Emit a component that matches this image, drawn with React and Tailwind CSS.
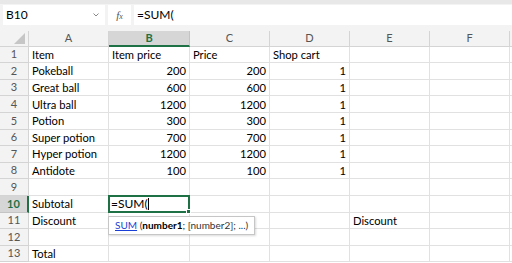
import React from 'react'

const cols = ['A', 'B', 'C', 'D', 'E', 'F']

const rows = [
  ['Item', 'Item price', 'Price', 'Shop cart', '', ''],
  ['Pokeball', 200, 200, 1, '', ''],
  ['Great ball', 600, 600, 1, '', ''],
  ['Ultra ball', 1200, 1200, 1, '', ''],
  ['Potion', 300, 300, 1, '', ''],
  ['Super potion', 700, 700, 1, '', ''],
  ['Hyper potion', 1200, 1200, 1, '', ''],
  ['Antidote', 100, 100, 1, '', ''],
  ['', '', '', '', '', ''],
  ['Subtotal', '', '', '', '', ''],
  ['Discount', '', '', '', 'Discount', ''],
  ['', '', '', '', '', ''],
  ['Total', '', '', '', '', ''],
]

const Cell = ({ value }) => {
  const num = typeof value === 'number'
  return (
    <div
      className={`h-[16.6px] border-r border-b border-[#e1e1e1] px-[3px] flex items-center leading-none whitespace-nowrap overflow-visible ${
        num ? 'justify-end' : 'justify-start'
      }`}
    >
      {value}
    </div>
  )
}

export default function App() {
  return (
    <div
      className="w-[512px] h-[263px] overflow-hidden bg-white text-[11.2px] text-black"
      style={{ fontFamily: 'Lato, "Open Sans", sans-serif' }}
    >
      {/* Formula bar */}
      <div className="h-[31px] bg-[#f3f3f3] border-t-[4px] border-[#e8e8e8] flex items-start pt-[1px] gap-[3px] pl-[3px]">
        <div className="w-[102px] h-[20px] bg-white flex items-center justify-between pl-[3px] pr-[6px] text-[12px]">
          <span>B10</span>
          <svg width="6" height="4" viewBox="0 0 6 4" className="text-[#888]">
            <path d="M0.5 0.5 L3 3 L5.5 0.5" fill="none" stroke="currentColor" strokeWidth="1" />
          </svg>
        </div>
        <div className="w-[23px] h-[20px] bg-white flex items-center justify-center text-[#555] italic text-[11px]" style={{ fontFamily: '"Liberation Serif", serif' }}>
          f<span className="text-[8px] mt-[3px]">x</span>
        </div>
        <div className="flex-1 h-[20px] bg-white flex items-center pl-[3px] text-[12px]">=SUM(</div>
      </div>

      {/* Grid */}
      <div className="relative grid grid-cols-[29px_80px_81px_80px_80px_80px_80px_1fr]">
        {/* header row */}
        <div className="h-[15.7px] bg-[#f3f3f3] border-r border-b border-[#d4d4d4] relative">
          <div
            className="absolute right-[3px] bottom-[2px] w-0 h-0 border-l-[11px] border-l-transparent border-b-[11px] border-b-[#c6c6c6]"
          />
        </div>
        {cols.map((c) => (
          <div
            key={c}
            className={`h-[15.7px] flex items-center justify-center border-r text-[11px] ${
              c === 'B'
                ? 'bg-[#d6d6d6] border-[#c4c4c4] border-b-2 border-b-[#1e7145] text-[#1e7145] font-bold'
                : 'bg-[#f3f3f3] border-[#d4d4d4] border-b text-[#555]'
            }`}
          >
            {c}
          </div>
        ))}
        <div className="h-[15.7px] bg-[#f3f3f3] border-b border-[#d4d4d4]" />

        {rows.map((r, i) => (
          <React.Fragment key={i}>
            <div
              className={`h-[16.6px] flex items-center justify-center text-[11px] border-b ${
                i === 9
                  ? 'bg-[#d6d6d6] text-[#1e7145] font-bold border-r-2 border-r-[#1e7145] border-b-[#c4c4c4]'
                  : 'bg-[#f3f3f3] text-[#555] border-r border-[#d4d4d4]'
              }`}
            >
              {i + 1}
            </div>
            {r.map((v, j) => (
              <Cell key={j} value={v} />
            ))}
            <div className="h-[16.6px] border-b border-[#e1e1e1]" />
          </React.Fragment>
        ))}

        {/* Active cell B10 */}
        <div className="absolute left-[108px] top-[164.3px] w-[82px] h-[18px] border-2 border-[#1e7145] flex items-center pl-[1px] text-[12px] leading-none">
          =SUM(<span className="w-px h-[12px] bg-black" />
          <div className="absolute -right-[3px] -bottom-[3px] w-[5px] h-[5px] bg-[#1e7145] border border-white" />
        </div>

        {/* Tooltip */}
        <div className="absolute left-[108px] top-[184.5px] w-[147px] h-[19px] bg-white border border-[#c6c6c6] shadow-[1px_1px_2px_rgba(0,0,0,0.15)] flex items-center pl-[6px] text-[10px] text-[#333] whitespace-nowrap">
          <span className="text-[#1a3fd6] underline">SUM</span>
          <span>&nbsp;(<b className="text-black">number1</b>; [number2]; ...)</span>
        </div>
      </div>
    </div>
  )
}
